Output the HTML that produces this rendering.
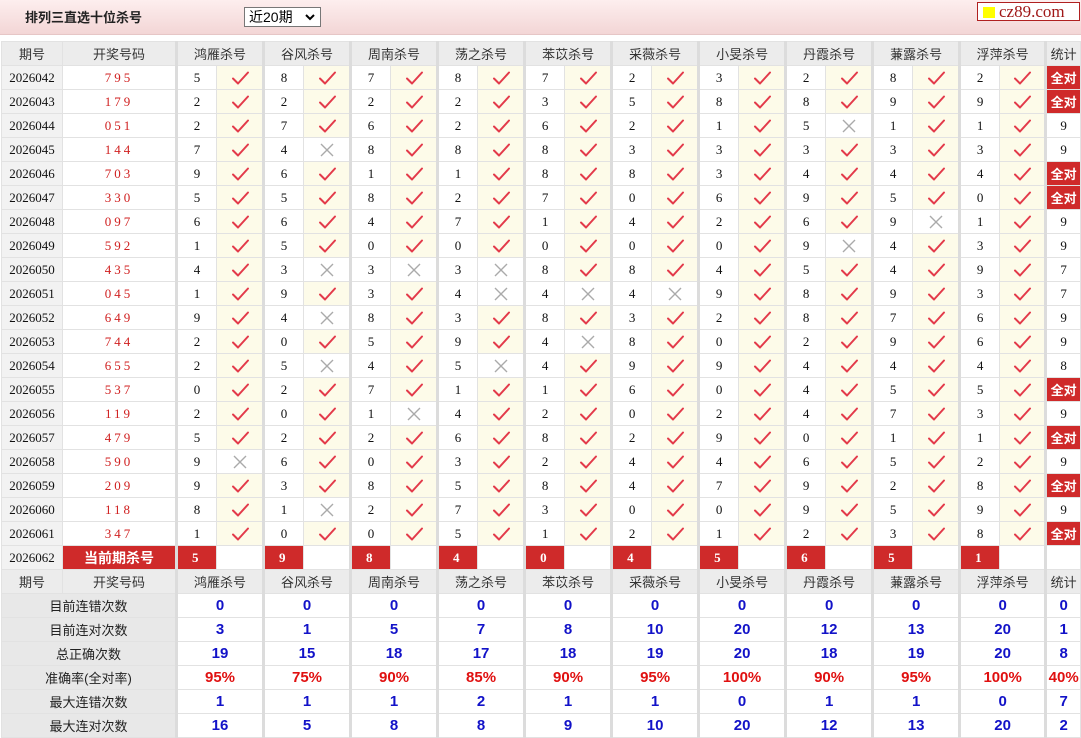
<!DOCTYPE html>
<html><head><meta charset="utf-8">
<style>
*{margin:0;padding:0;box-sizing:border-box}
body{width:1081px;height:738px;background:#fff;font-family:"Liberation Sans","Noto Sans CJK SC",sans-serif;overflow:hidden;position:relative}
.top{position:absolute;left:0;top:0;width:1081px;height:35px;background:linear-gradient(#fdeeee,#f3d6d6);border-bottom:1px solid #e6c6c6}
.title{position:absolute;left:25px;top:7px;font-size:13px;font-weight:bold;color:#222}
.sel{position:absolute;left:244px;top:7px;width:77px;height:20px;border:1px solid #777;background:#fff;font-size:14px;line-height:18px;padding-left:4px;color:#000}
.sel svg{position:absolute;right:5px;top:6px}
.logo{position:absolute;left:977px;top:2px;width:103px;height:19px;border:1px solid #b02020;background:#fff;font-family:"Liberation Serif",serif;font-size:17px;line-height:17px;color:#a01818;padding-left:21px}
.logo i{position:absolute;left:5px;top:4px;width:12px;height:11px;background:#ffff00}
table{position:absolute;left:1px;top:41px;border-collapse:collapse;table-layout:fixed;width:1079px}
td{height:24px;border:1px solid #e2e2e2;text-align:center;font-size:13px;padding:0;overflow:hidden;white-space:nowrap}
tr.h td{background:#ececec;color:#333}
td.q{background:#f2f2f2;font-family:"Liberation Serif",serif;color:#111}
td.d{font-family:"Liberation Serif",serif;color:#d02020;letter-spacing:3px}
td.n{font-family:"Liberation Serif",serif;color:#111;border-left:3px solid #dcdcdc}
td.k{background:#fdfbe9}
td.x{background:#fff}
td.g{border-left:3px solid #dcdcdc}
td.s{font-family:"Liberation Serif",serif;color:#111}
td.a{background:#cf2a2a;color:#fff;font-weight:bold;font-size:13px}
td.c{background:#cf2a2a;color:#fff;font-weight:bold;font-family:"Liberation Serif",serif;border-left:3px solid #dcdcdc;text-align:left;padding-left:14px}
td.cc{background:#cf2a2a;color:#fff;font-weight:bold;font-size:14px}
td.l{background:#e8e8e8;color:#222;font-size:13px}
td.v{color:#1212c8;font-weight:bold;font-size:15px;border-left:3px solid #dcdcdc}
td.r{color:#e01010;font-weight:bold;font-size:15px;border-left:3px solid #dcdcdc}
svg.i{width:20px;height:16px;vertical-align:middle}
</style></head><body>
<svg width="0" height="0" style="position:absolute"><defs>
<symbol id="c" viewBox="0 0 20 16"><path d="M3 8.5 L8 13.5 L18 2.5" fill="none" stroke="#e33a4a" stroke-width="2" stroke-linecap="round" stroke-linejoin="round"/></symbol>
<symbol id="x" viewBox="0 0 20 16"><path d="M4 2 L16 14 M16 2 L4 14" fill="none" stroke="#aaa" stroke-width="1.4"/></symbol>
</defs></svg>
<div class="top"><div class="title">排列三直选十位杀号</div><div class="sel">近20期<svg width="10" height="7" viewBox="0 0 10 7"><path d="M1 1 L5 5 L9 1" fill="none" stroke="#000" stroke-width="2"/></svg></div><div class="logo"><i></i>cz89.com</div></div>
<table>
<colgroup><col style="width:61px"><col style="width:114px">
<col style="width:40px"><col style="width:47px"><col style="width:40px"><col style="width:47px"><col style="width:40px"><col style="width:47px"><col style="width:40px"><col style="width:47px"><col style="width:40px"><col style="width:47px"><col style="width:40px"><col style="width:47px"><col style="width:40px"><col style="width:47px"><col style="width:40px"><col style="width:47px"><col style="width:40px"><col style="width:47px"><col style="width:40px"><col style="width:46px"><col style="width:35px"></colgroup>
<tr class="h"><td>期号</td><td>开奖号码</td><td colspan="2" class="g">鸿雁杀号</td><td colspan="2" class="g">谷风杀号</td><td colspan="2" class="g">周南杀号</td><td colspan="2" class="g">荡之杀号</td><td colspan="2" class="g">苯苡杀号</td><td colspan="2" class="g">采薇杀号</td><td colspan="2" class="g">小旻杀号</td><td colspan="2" class="g">丹霞杀号</td><td colspan="2" class="g">蒹露杀号</td><td colspan="2" class="g">浮萍杀号</td><td class="g">统计</td></tr>
<tr><td class="q">2026042</td><td class="d">795</td><td class="n">5</td><td class="k"><svg class="i"><use href="#c"/></svg></td><td class="n">8</td><td class="k"><svg class="i"><use href="#c"/></svg></td><td class="n">7</td><td class="k"><svg class="i"><use href="#c"/></svg></td><td class="n">8</td><td class="k"><svg class="i"><use href="#c"/></svg></td><td class="n">7</td><td class="k"><svg class="i"><use href="#c"/></svg></td><td class="n">2</td><td class="k"><svg class="i"><use href="#c"/></svg></td><td class="n">3</td><td class="k"><svg class="i"><use href="#c"/></svg></td><td class="n">2</td><td class="k"><svg class="i"><use href="#c"/></svg></td><td class="n">8</td><td class="k"><svg class="i"><use href="#c"/></svg></td><td class="n">2</td><td class="k"><svg class="i"><use href="#c"/></svg></td><td class="a g">全对</td></tr>
<tr><td class="q">2026043</td><td class="d">179</td><td class="n">2</td><td class="k"><svg class="i"><use href="#c"/></svg></td><td class="n">2</td><td class="k"><svg class="i"><use href="#c"/></svg></td><td class="n">2</td><td class="k"><svg class="i"><use href="#c"/></svg></td><td class="n">2</td><td class="k"><svg class="i"><use href="#c"/></svg></td><td class="n">3</td><td class="k"><svg class="i"><use href="#c"/></svg></td><td class="n">5</td><td class="k"><svg class="i"><use href="#c"/></svg></td><td class="n">8</td><td class="k"><svg class="i"><use href="#c"/></svg></td><td class="n">8</td><td class="k"><svg class="i"><use href="#c"/></svg></td><td class="n">9</td><td class="k"><svg class="i"><use href="#c"/></svg></td><td class="n">9</td><td class="k"><svg class="i"><use href="#c"/></svg></td><td class="a g">全对</td></tr>
<tr><td class="q">2026044</td><td class="d">051</td><td class="n">2</td><td class="k"><svg class="i"><use href="#c"/></svg></td><td class="n">7</td><td class="k"><svg class="i"><use href="#c"/></svg></td><td class="n">6</td><td class="k"><svg class="i"><use href="#c"/></svg></td><td class="n">2</td><td class="k"><svg class="i"><use href="#c"/></svg></td><td class="n">6</td><td class="k"><svg class="i"><use href="#c"/></svg></td><td class="n">2</td><td class="k"><svg class="i"><use href="#c"/></svg></td><td class="n">1</td><td class="k"><svg class="i"><use href="#c"/></svg></td><td class="n">5</td><td class="x"><svg class="i"><use href="#x"/></svg></td><td class="n">1</td><td class="k"><svg class="i"><use href="#c"/></svg></td><td class="n">1</td><td class="k"><svg class="i"><use href="#c"/></svg></td><td class="s g">9</td></tr>
<tr><td class="q">2026045</td><td class="d">144</td><td class="n">7</td><td class="k"><svg class="i"><use href="#c"/></svg></td><td class="n">4</td><td class="x"><svg class="i"><use href="#x"/></svg></td><td class="n">8</td><td class="k"><svg class="i"><use href="#c"/></svg></td><td class="n">8</td><td class="k"><svg class="i"><use href="#c"/></svg></td><td class="n">8</td><td class="k"><svg class="i"><use href="#c"/></svg></td><td class="n">3</td><td class="k"><svg class="i"><use href="#c"/></svg></td><td class="n">3</td><td class="k"><svg class="i"><use href="#c"/></svg></td><td class="n">3</td><td class="k"><svg class="i"><use href="#c"/></svg></td><td class="n">3</td><td class="k"><svg class="i"><use href="#c"/></svg></td><td class="n">3</td><td class="k"><svg class="i"><use href="#c"/></svg></td><td class="s g">9</td></tr>
<tr><td class="q">2026046</td><td class="d">703</td><td class="n">9</td><td class="k"><svg class="i"><use href="#c"/></svg></td><td class="n">6</td><td class="k"><svg class="i"><use href="#c"/></svg></td><td class="n">1</td><td class="k"><svg class="i"><use href="#c"/></svg></td><td class="n">1</td><td class="k"><svg class="i"><use href="#c"/></svg></td><td class="n">8</td><td class="k"><svg class="i"><use href="#c"/></svg></td><td class="n">8</td><td class="k"><svg class="i"><use href="#c"/></svg></td><td class="n">3</td><td class="k"><svg class="i"><use href="#c"/></svg></td><td class="n">4</td><td class="k"><svg class="i"><use href="#c"/></svg></td><td class="n">4</td><td class="k"><svg class="i"><use href="#c"/></svg></td><td class="n">4</td><td class="k"><svg class="i"><use href="#c"/></svg></td><td class="a g">全对</td></tr>
<tr><td class="q">2026047</td><td class="d">330</td><td class="n">5</td><td class="k"><svg class="i"><use href="#c"/></svg></td><td class="n">5</td><td class="k"><svg class="i"><use href="#c"/></svg></td><td class="n">8</td><td class="k"><svg class="i"><use href="#c"/></svg></td><td class="n">2</td><td class="k"><svg class="i"><use href="#c"/></svg></td><td class="n">7</td><td class="k"><svg class="i"><use href="#c"/></svg></td><td class="n">0</td><td class="k"><svg class="i"><use href="#c"/></svg></td><td class="n">6</td><td class="k"><svg class="i"><use href="#c"/></svg></td><td class="n">9</td><td class="k"><svg class="i"><use href="#c"/></svg></td><td class="n">5</td><td class="k"><svg class="i"><use href="#c"/></svg></td><td class="n">0</td><td class="k"><svg class="i"><use href="#c"/></svg></td><td class="a g">全对</td></tr>
<tr><td class="q">2026048</td><td class="d">097</td><td class="n">6</td><td class="k"><svg class="i"><use href="#c"/></svg></td><td class="n">6</td><td class="k"><svg class="i"><use href="#c"/></svg></td><td class="n">4</td><td class="k"><svg class="i"><use href="#c"/></svg></td><td class="n">7</td><td class="k"><svg class="i"><use href="#c"/></svg></td><td class="n">1</td><td class="k"><svg class="i"><use href="#c"/></svg></td><td class="n">4</td><td class="k"><svg class="i"><use href="#c"/></svg></td><td class="n">2</td><td class="k"><svg class="i"><use href="#c"/></svg></td><td class="n">6</td><td class="k"><svg class="i"><use href="#c"/></svg></td><td class="n">9</td><td class="x"><svg class="i"><use href="#x"/></svg></td><td class="n">1</td><td class="k"><svg class="i"><use href="#c"/></svg></td><td class="s g">9</td></tr>
<tr><td class="q">2026049</td><td class="d">592</td><td class="n">1</td><td class="k"><svg class="i"><use href="#c"/></svg></td><td class="n">5</td><td class="k"><svg class="i"><use href="#c"/></svg></td><td class="n">0</td><td class="k"><svg class="i"><use href="#c"/></svg></td><td class="n">0</td><td class="k"><svg class="i"><use href="#c"/></svg></td><td class="n">0</td><td class="k"><svg class="i"><use href="#c"/></svg></td><td class="n">0</td><td class="k"><svg class="i"><use href="#c"/></svg></td><td class="n">0</td><td class="k"><svg class="i"><use href="#c"/></svg></td><td class="n">9</td><td class="x"><svg class="i"><use href="#x"/></svg></td><td class="n">4</td><td class="k"><svg class="i"><use href="#c"/></svg></td><td class="n">3</td><td class="k"><svg class="i"><use href="#c"/></svg></td><td class="s g">9</td></tr>
<tr><td class="q">2026050</td><td class="d">435</td><td class="n">4</td><td class="k"><svg class="i"><use href="#c"/></svg></td><td class="n">3</td><td class="x"><svg class="i"><use href="#x"/></svg></td><td class="n">3</td><td class="x"><svg class="i"><use href="#x"/></svg></td><td class="n">3</td><td class="x"><svg class="i"><use href="#x"/></svg></td><td class="n">8</td><td class="k"><svg class="i"><use href="#c"/></svg></td><td class="n">8</td><td class="k"><svg class="i"><use href="#c"/></svg></td><td class="n">4</td><td class="k"><svg class="i"><use href="#c"/></svg></td><td class="n">5</td><td class="k"><svg class="i"><use href="#c"/></svg></td><td class="n">4</td><td class="k"><svg class="i"><use href="#c"/></svg></td><td class="n">9</td><td class="k"><svg class="i"><use href="#c"/></svg></td><td class="s g">7</td></tr>
<tr><td class="q">2026051</td><td class="d">045</td><td class="n">1</td><td class="k"><svg class="i"><use href="#c"/></svg></td><td class="n">9</td><td class="k"><svg class="i"><use href="#c"/></svg></td><td class="n">3</td><td class="k"><svg class="i"><use href="#c"/></svg></td><td class="n">4</td><td class="x"><svg class="i"><use href="#x"/></svg></td><td class="n">4</td><td class="x"><svg class="i"><use href="#x"/></svg></td><td class="n">4</td><td class="x"><svg class="i"><use href="#x"/></svg></td><td class="n">9</td><td class="k"><svg class="i"><use href="#c"/></svg></td><td class="n">8</td><td class="k"><svg class="i"><use href="#c"/></svg></td><td class="n">9</td><td class="k"><svg class="i"><use href="#c"/></svg></td><td class="n">3</td><td class="k"><svg class="i"><use href="#c"/></svg></td><td class="s g">7</td></tr>
<tr><td class="q">2026052</td><td class="d">649</td><td class="n">9</td><td class="k"><svg class="i"><use href="#c"/></svg></td><td class="n">4</td><td class="x"><svg class="i"><use href="#x"/></svg></td><td class="n">8</td><td class="k"><svg class="i"><use href="#c"/></svg></td><td class="n">3</td><td class="k"><svg class="i"><use href="#c"/></svg></td><td class="n">8</td><td class="k"><svg class="i"><use href="#c"/></svg></td><td class="n">3</td><td class="k"><svg class="i"><use href="#c"/></svg></td><td class="n">2</td><td class="k"><svg class="i"><use href="#c"/></svg></td><td class="n">8</td><td class="k"><svg class="i"><use href="#c"/></svg></td><td class="n">7</td><td class="k"><svg class="i"><use href="#c"/></svg></td><td class="n">6</td><td class="k"><svg class="i"><use href="#c"/></svg></td><td class="s g">9</td></tr>
<tr><td class="q">2026053</td><td class="d">744</td><td class="n">2</td><td class="k"><svg class="i"><use href="#c"/></svg></td><td class="n">0</td><td class="k"><svg class="i"><use href="#c"/></svg></td><td class="n">5</td><td class="k"><svg class="i"><use href="#c"/></svg></td><td class="n">9</td><td class="k"><svg class="i"><use href="#c"/></svg></td><td class="n">4</td><td class="x"><svg class="i"><use href="#x"/></svg></td><td class="n">8</td><td class="k"><svg class="i"><use href="#c"/></svg></td><td class="n">0</td><td class="k"><svg class="i"><use href="#c"/></svg></td><td class="n">2</td><td class="k"><svg class="i"><use href="#c"/></svg></td><td class="n">9</td><td class="k"><svg class="i"><use href="#c"/></svg></td><td class="n">6</td><td class="k"><svg class="i"><use href="#c"/></svg></td><td class="s g">9</td></tr>
<tr><td class="q">2026054</td><td class="d">655</td><td class="n">2</td><td class="k"><svg class="i"><use href="#c"/></svg></td><td class="n">5</td><td class="x"><svg class="i"><use href="#x"/></svg></td><td class="n">4</td><td class="k"><svg class="i"><use href="#c"/></svg></td><td class="n">5</td><td class="x"><svg class="i"><use href="#x"/></svg></td><td class="n">4</td><td class="k"><svg class="i"><use href="#c"/></svg></td><td class="n">9</td><td class="k"><svg class="i"><use href="#c"/></svg></td><td class="n">9</td><td class="k"><svg class="i"><use href="#c"/></svg></td><td class="n">4</td><td class="k"><svg class="i"><use href="#c"/></svg></td><td class="n">4</td><td class="k"><svg class="i"><use href="#c"/></svg></td><td class="n">4</td><td class="k"><svg class="i"><use href="#c"/></svg></td><td class="s g">8</td></tr>
<tr><td class="q">2026055</td><td class="d">537</td><td class="n">0</td><td class="k"><svg class="i"><use href="#c"/></svg></td><td class="n">2</td><td class="k"><svg class="i"><use href="#c"/></svg></td><td class="n">7</td><td class="k"><svg class="i"><use href="#c"/></svg></td><td class="n">1</td><td class="k"><svg class="i"><use href="#c"/></svg></td><td class="n">1</td><td class="k"><svg class="i"><use href="#c"/></svg></td><td class="n">6</td><td class="k"><svg class="i"><use href="#c"/></svg></td><td class="n">0</td><td class="k"><svg class="i"><use href="#c"/></svg></td><td class="n">4</td><td class="k"><svg class="i"><use href="#c"/></svg></td><td class="n">5</td><td class="k"><svg class="i"><use href="#c"/></svg></td><td class="n">5</td><td class="k"><svg class="i"><use href="#c"/></svg></td><td class="a g">全对</td></tr>
<tr><td class="q">2026056</td><td class="d">119</td><td class="n">2</td><td class="k"><svg class="i"><use href="#c"/></svg></td><td class="n">0</td><td class="k"><svg class="i"><use href="#c"/></svg></td><td class="n">1</td><td class="x"><svg class="i"><use href="#x"/></svg></td><td class="n">4</td><td class="k"><svg class="i"><use href="#c"/></svg></td><td class="n">2</td><td class="k"><svg class="i"><use href="#c"/></svg></td><td class="n">0</td><td class="k"><svg class="i"><use href="#c"/></svg></td><td class="n">2</td><td class="k"><svg class="i"><use href="#c"/></svg></td><td class="n">4</td><td class="k"><svg class="i"><use href="#c"/></svg></td><td class="n">7</td><td class="k"><svg class="i"><use href="#c"/></svg></td><td class="n">3</td><td class="k"><svg class="i"><use href="#c"/></svg></td><td class="s g">9</td></tr>
<tr><td class="q">2026057</td><td class="d">479</td><td class="n">5</td><td class="k"><svg class="i"><use href="#c"/></svg></td><td class="n">2</td><td class="k"><svg class="i"><use href="#c"/></svg></td><td class="n">2</td><td class="k"><svg class="i"><use href="#c"/></svg></td><td class="n">6</td><td class="k"><svg class="i"><use href="#c"/></svg></td><td class="n">8</td><td class="k"><svg class="i"><use href="#c"/></svg></td><td class="n">2</td><td class="k"><svg class="i"><use href="#c"/></svg></td><td class="n">9</td><td class="k"><svg class="i"><use href="#c"/></svg></td><td class="n">0</td><td class="k"><svg class="i"><use href="#c"/></svg></td><td class="n">1</td><td class="k"><svg class="i"><use href="#c"/></svg></td><td class="n">1</td><td class="k"><svg class="i"><use href="#c"/></svg></td><td class="a g">全对</td></tr>
<tr><td class="q">2026058</td><td class="d">590</td><td class="n">9</td><td class="x"><svg class="i"><use href="#x"/></svg></td><td class="n">6</td><td class="k"><svg class="i"><use href="#c"/></svg></td><td class="n">0</td><td class="k"><svg class="i"><use href="#c"/></svg></td><td class="n">3</td><td class="k"><svg class="i"><use href="#c"/></svg></td><td class="n">2</td><td class="k"><svg class="i"><use href="#c"/></svg></td><td class="n">4</td><td class="k"><svg class="i"><use href="#c"/></svg></td><td class="n">4</td><td class="k"><svg class="i"><use href="#c"/></svg></td><td class="n">6</td><td class="k"><svg class="i"><use href="#c"/></svg></td><td class="n">5</td><td class="k"><svg class="i"><use href="#c"/></svg></td><td class="n">2</td><td class="k"><svg class="i"><use href="#c"/></svg></td><td class="s g">9</td></tr>
<tr><td class="q">2026059</td><td class="d">209</td><td class="n">9</td><td class="k"><svg class="i"><use href="#c"/></svg></td><td class="n">3</td><td class="k"><svg class="i"><use href="#c"/></svg></td><td class="n">8</td><td class="k"><svg class="i"><use href="#c"/></svg></td><td class="n">5</td><td class="k"><svg class="i"><use href="#c"/></svg></td><td class="n">8</td><td class="k"><svg class="i"><use href="#c"/></svg></td><td class="n">4</td><td class="k"><svg class="i"><use href="#c"/></svg></td><td class="n">7</td><td class="k"><svg class="i"><use href="#c"/></svg></td><td class="n">9</td><td class="k"><svg class="i"><use href="#c"/></svg></td><td class="n">2</td><td class="k"><svg class="i"><use href="#c"/></svg></td><td class="n">8</td><td class="k"><svg class="i"><use href="#c"/></svg></td><td class="a g">全对</td></tr>
<tr><td class="q">2026060</td><td class="d">118</td><td class="n">8</td><td class="k"><svg class="i"><use href="#c"/></svg></td><td class="n">1</td><td class="x"><svg class="i"><use href="#x"/></svg></td><td class="n">2</td><td class="k"><svg class="i"><use href="#c"/></svg></td><td class="n">7</td><td class="k"><svg class="i"><use href="#c"/></svg></td><td class="n">3</td><td class="k"><svg class="i"><use href="#c"/></svg></td><td class="n">0</td><td class="k"><svg class="i"><use href="#c"/></svg></td><td class="n">0</td><td class="k"><svg class="i"><use href="#c"/></svg></td><td class="n">9</td><td class="k"><svg class="i"><use href="#c"/></svg></td><td class="n">5</td><td class="k"><svg class="i"><use href="#c"/></svg></td><td class="n">9</td><td class="k"><svg class="i"><use href="#c"/></svg></td><td class="s g">9</td></tr>
<tr><td class="q">2026061</td><td class="d">347</td><td class="n">1</td><td class="k"><svg class="i"><use href="#c"/></svg></td><td class="n">0</td><td class="k"><svg class="i"><use href="#c"/></svg></td><td class="n">0</td><td class="k"><svg class="i"><use href="#c"/></svg></td><td class="n">5</td><td class="k"><svg class="i"><use href="#c"/></svg></td><td class="n">1</td><td class="k"><svg class="i"><use href="#c"/></svg></td><td class="n">2</td><td class="k"><svg class="i"><use href="#c"/></svg></td><td class="n">1</td><td class="k"><svg class="i"><use href="#c"/></svg></td><td class="n">2</td><td class="k"><svg class="i"><use href="#c"/></svg></td><td class="n">3</td><td class="k"><svg class="i"><use href="#c"/></svg></td><td class="n">8</td><td class="k"><svg class="i"><use href="#c"/></svg></td><td class="a g">全对</td></tr>
<tr><td class="q">2026062</td><td class="cc">当前期杀号</td><td class="c">5</td><td></td><td class="c">9</td><td></td><td class="c">8</td><td></td><td class="c">4</td><td></td><td class="c">0</td><td></td><td class="c">4</td><td></td><td class="c">5</td><td></td><td class="c">6</td><td></td><td class="c">5</td><td></td><td class="c">1</td><td></td><td class="g"></td></tr>
<tr class="h"><td>期号</td><td>开奖号码</td><td colspan="2" class="g">鸿雁杀号</td><td colspan="2" class="g">谷风杀号</td><td colspan="2" class="g">周南杀号</td><td colspan="2" class="g">荡之杀号</td><td colspan="2" class="g">苯苡杀号</td><td colspan="2" class="g">采薇杀号</td><td colspan="2" class="g">小旻杀号</td><td colspan="2" class="g">丹霞杀号</td><td colspan="2" class="g">蒹露杀号</td><td colspan="2" class="g">浮萍杀号</td><td class="g">统计</td></tr>
<tr><td colspan="2" class="l">目前连错次数</td><td colspan="2" class="v">0</td><td colspan="2" class="v">0</td><td colspan="2" class="v">0</td><td colspan="2" class="v">0</td><td colspan="2" class="v">0</td><td colspan="2" class="v">0</td><td colspan="2" class="v">0</td><td colspan="2" class="v">0</td><td colspan="2" class="v">0</td><td colspan="2" class="v">0</td><td class="v">0</td></tr>
<tr><td colspan="2" class="l">目前连对次数</td><td colspan="2" class="v">3</td><td colspan="2" class="v">1</td><td colspan="2" class="v">5</td><td colspan="2" class="v">7</td><td colspan="2" class="v">8</td><td colspan="2" class="v">10</td><td colspan="2" class="v">20</td><td colspan="2" class="v">12</td><td colspan="2" class="v">13</td><td colspan="2" class="v">20</td><td class="v">1</td></tr>
<tr><td colspan="2" class="l">总正确次数</td><td colspan="2" class="v">19</td><td colspan="2" class="v">15</td><td colspan="2" class="v">18</td><td colspan="2" class="v">17</td><td colspan="2" class="v">18</td><td colspan="2" class="v">19</td><td colspan="2" class="v">20</td><td colspan="2" class="v">18</td><td colspan="2" class="v">19</td><td colspan="2" class="v">20</td><td class="v">8</td></tr>
<tr><td colspan="2" class="l">准确率(全对率)</td><td colspan="2" class="r">95%</td><td colspan="2" class="r">75%</td><td colspan="2" class="r">90%</td><td colspan="2" class="r">85%</td><td colspan="2" class="r">90%</td><td colspan="2" class="r">95%</td><td colspan="2" class="r">100%</td><td colspan="2" class="r">90%</td><td colspan="2" class="r">95%</td><td colspan="2" class="r">100%</td><td class="r">40%</td></tr>
<tr><td colspan="2" class="l">最大连错次数</td><td colspan="2" class="v">1</td><td colspan="2" class="v">1</td><td colspan="2" class="v">1</td><td colspan="2" class="v">2</td><td colspan="2" class="v">1</td><td colspan="2" class="v">1</td><td colspan="2" class="v">0</td><td colspan="2" class="v">1</td><td colspan="2" class="v">1</td><td colspan="2" class="v">0</td><td class="v">7</td></tr>
<tr><td colspan="2" class="l">最大连对次数</td><td colspan="2" class="v">16</td><td colspan="2" class="v">5</td><td colspan="2" class="v">8</td><td colspan="2" class="v">8</td><td colspan="2" class="v">9</td><td colspan="2" class="v">10</td><td colspan="2" class="v">20</td><td colspan="2" class="v">12</td><td colspan="2" class="v">13</td><td colspan="2" class="v">20</td><td class="v">2</td></tr>
</table>
</body></html>
